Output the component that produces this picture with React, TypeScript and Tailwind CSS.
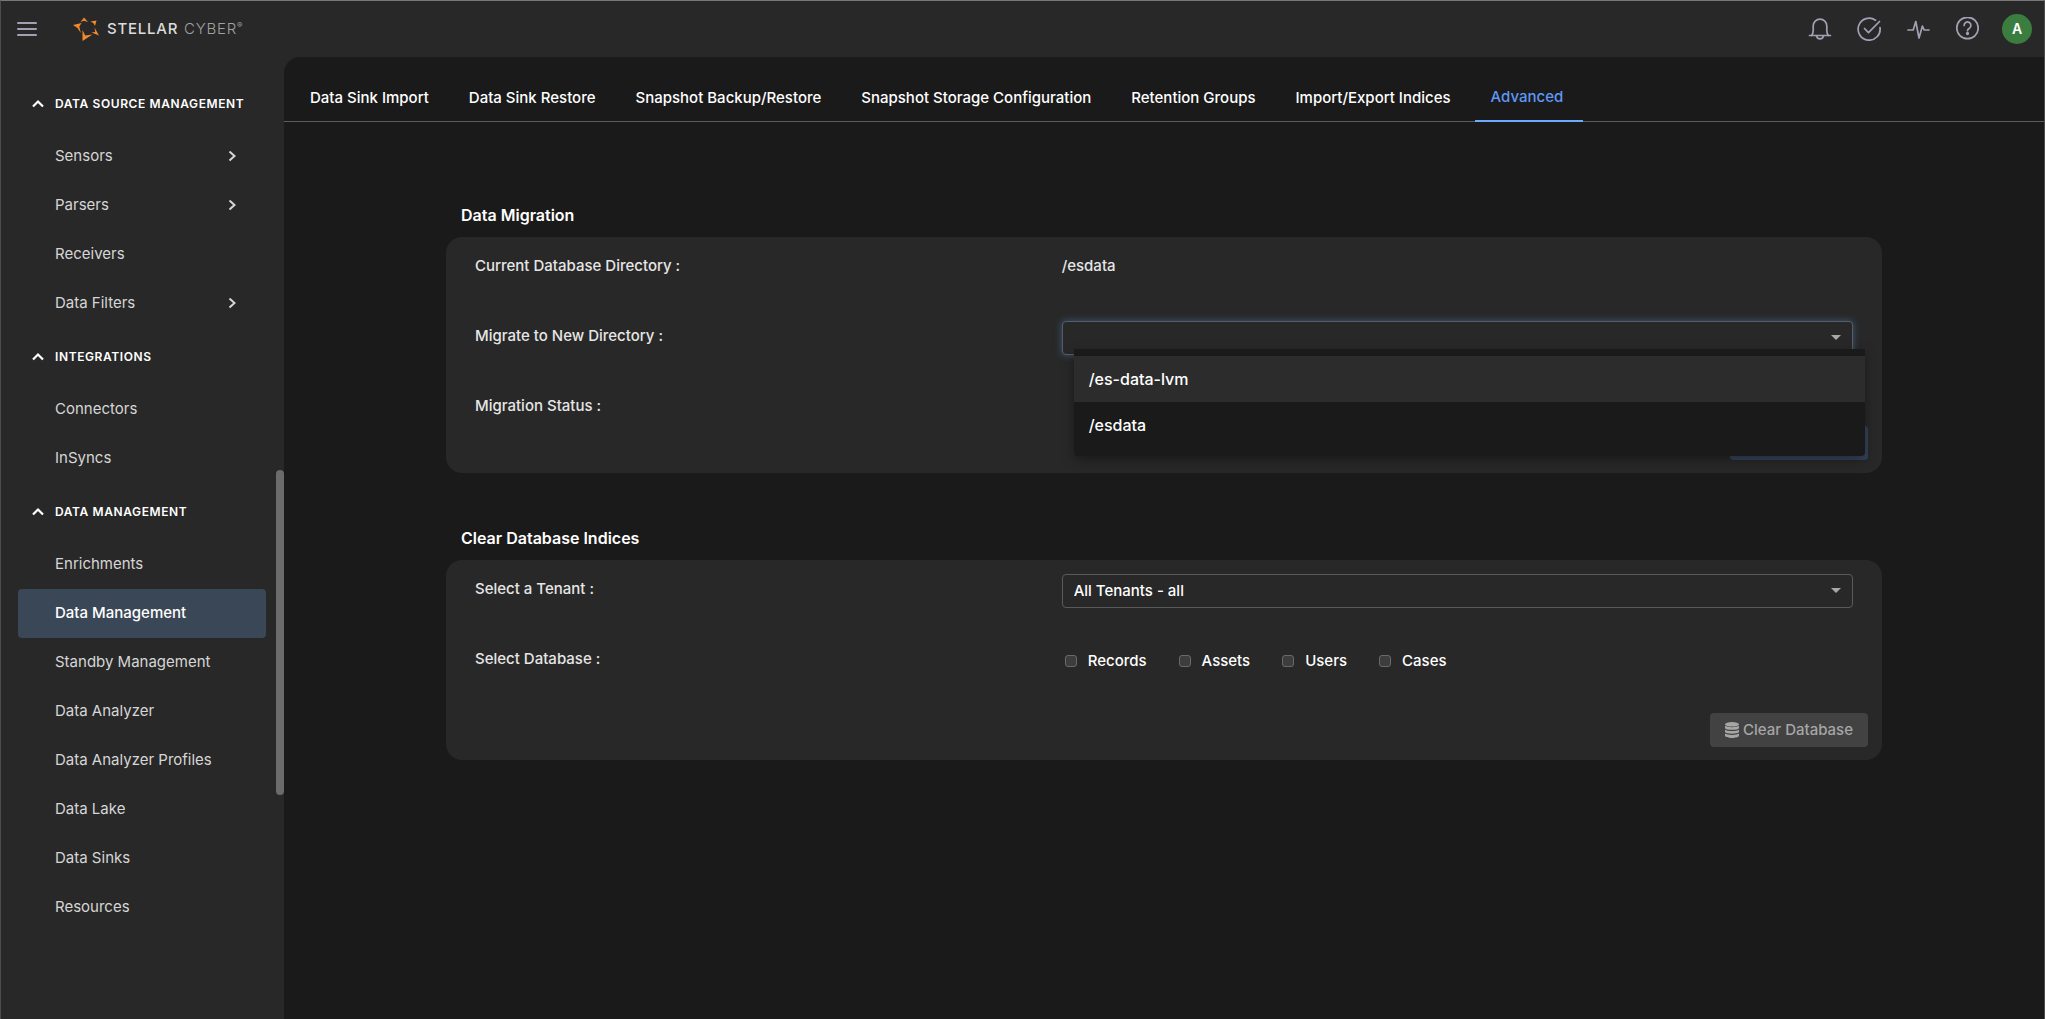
import { useState } from 'react'
import type { ReactNode } from 'react'

type NavItem = { label: string; expandable?: boolean }
type NavSection = { title: string; items: NavItem[] }

const sections: NavSection[] = [
  {
    title: 'DATA SOURCE MANAGEMENT',
    items: [
      { label: 'Sensors', expandable: true },
      { label: 'Parsers', expandable: true },
      { label: 'Receivers' },
      { label: 'Data Filters', expandable: true },
    ],
  },
  {
    title: 'INTEGRATIONS',
    items: [{ label: 'Connectors' }, { label: 'InSyncs' }],
  },
  {
    title: 'DATA MANAGEMENT',
    items: [
      { label: 'Enrichments' },
      { label: 'Data Management' },
      { label: 'Standby Management' },
      { label: 'Data Analyzer' },
      { label: 'Data Analyzer Profiles' },
      { label: 'Data Lake' },
      { label: 'Data Sinks' },
      { label: 'Resources' },
    ],
  },
]

const tabs = [
  'Data Sink Import',
  'Data Sink Restore',
  'Snapshot Backup/Restore',
  'Snapshot Storage Configuration',
  'Retention Groups',
  'Import/Export Indices',
  'Advanced',
]

const directories = ['/es-data-lvm', '/esdata']
const databases = ['Records', 'Assets', 'Users', 'Cases']

function LogoMark() {
  return (
    <svg viewBox="0 0 26 24" className="h-6 w-[26px]" fill="#f08a2c" aria-hidden="true">
      <path d="M11 0.500L15 5L11 3.800L7.500 5Z" />
      <path d="M17.500 4.500L23.500 3.500L22 9L20.500 6.300Z" />
      <path d="M0 8L8.500 6L6.300 9.500L7.800 16L4.500 11Z" />
      <path d="M21.500 10.500L26 18.500L18.500 15.500L22.200 15Z" />
      <path d="M9.500 13L12.200 18.500L19.500 17.500L9.500 24Z" />
    </svg>
  )
}

function TopIcon({ label, children }: { label: string; children: ReactNode }) {
  return (
    <button type="button" aria-label={label} className="size-6 text-[#a3a0b4]">
      <svg
        viewBox="0 0 24 24"
        className="size-6"
        fill="none"
        stroke="currentColor"
        strokeWidth="1.7"
        strokeLinecap="round"
        strokeLinejoin="round"
      >
        {children}
      </svg>
    </button>
  )
}

function Header() {
  return (
    <header className="flex h-14 items-center justify-between pl-4 pr-3">
      <div className="flex items-center gap-9">
        <button type="button" aria-label="Toggle menu" className="flex w-5 flex-col gap-1">
          <span className="h-[2px] rounded-full bg-[#a3a0b4]" />
          <span className="h-[2px] rounded-full bg-[#a3a0b4]" />
          <span className="h-[2px] rounded-full bg-[#a3a0b4]" />
        </button>
        <a href="#" className="flex items-center gap-2">
          <LogoMark />
          <span className="flex text-[15px] leading-5 tracking-wider text-[#a0a0a0]">
            <span className="mr-1.5 font-medium text-[#dcdcdc]">STELLAR</span>
            <span className="font-light">CYBER</span>
            <span className="text-[8px] leading-3">®</span>
          </span>
        </a>
      </div>
      <div className="flex items-center gap-[25px]">
        <TopIcon label="Notifications">
          <path d="M1.500 18.500h21" />
          <path d="M3.500 18.500c1.300-1.300 1.700-2.700 1.700-5V9a6.800 6.800 0 0 1 13.600 0v4.500c0 2.300.4 3.700 1.700 5" />
          <path d="M8.500 19c.6 2 1.800 2.900 3.500 2.900s2.900-.9 3.500-2.900" />
        </TopIcon>
        <TopIcon label="Tasks">
          <path d="M18.500 3.200A11 11 0 1 0 23 10.500" />
          <path d="M7.500 11.500l4 4.200L22.500 4.500" />
        </TopIcon>
        <TopIcon label="System health">
          <path d="M2 13h5.200l2.600-8.500L13 21l3.400-12 1.800 4H23" />
        </TopIcon>
        <TopIcon label="Help">
          <circle cx="12.500" cy="11" r="10.700" />
          <path d="M9.100 8.400a3.400 3.400 0 1 1 5.300 2.800c-1.300.8-1.900 1.400-1.900 2.500" />
          <circle cx="12.500" cy="16.500" r="0.800" fill="currentColor" />
        </TopIcon>
        <button
          type="button"
          className="ml-[-2px] size-[30px] rounded-full bg-[#3b7d3f] text-sm font-semibold text-white"
        >
          A
        </button>
      </div>
    </header>
  )
}

function Sidebar() {
  return (
    <aside className="relative w-[283px] shrink-0 pt-[18px]">
      <nav className="pl-[17px] pr-[18px]">
        {sections.map((section) => (
          <div key={section.title}>
            <button
              type="button"
              className="flex h-[57px] w-full items-center gap-[11px] pl-[14px] text-xs font-semibold tracking-wider text-white"
            >
              <svg viewBox="0 0 12 12" className="size-3" fill="none" stroke="currentColor" strokeWidth="2.200">
                <path d="M1 8.500L6 3.500L11 8.500" />
              </svg>
              {section.title}
            </button>
            {section.items.map((item) => (
              <a
                key={item.label}
                href="#"
                className={
                  item.label === 'Data Management'
                    ? 'flex h-[49px] items-center justify-between rounded bg-[#3a4756] pl-[37px] pr-[30px] text-[15px] font-medium text-white'
                    : 'flex h-[49px] items-center justify-between rounded pl-[37px] pr-[30px] text-[15px] text-[#d6d6d6]'
                }
              >
                {item.label}
                {item.expandable && (
                  <svg viewBox="0 0 8 12" className="h-3 w-2" fill="none" stroke="currentColor" strokeWidth="2">
                    <path d="M1.500 0.500L6.500 5L1.500 9.500" />
                  </svg>
                )}
              </a>
            ))}
          </div>
        ))}
      </nav>
      <div className="absolute right-0 top-[413px] h-[325px] w-2 rounded-full bg-[#6b6b6b]" />
    </aside>
  )
}

function Caret() {
  return (
    <svg
      viewBox="0 0 10 5"
      className="pointer-events-none absolute right-3 top-[14px] h-[5px] w-[10px]"
      fill="#a8a8a8"
      aria-hidden="true"
    >
      <path d="M0 0h10L5 5z" />
    </svg>
  )
}

function Field({ label, htmlFor, last, children }: {
  label: string
  htmlFor?: string
  last?: boolean
  children?: ReactNode
}) {
  return (
    <div className={last ? 'grid grid-cols-12 leading-[30px]' : 'grid h-[70px] grid-cols-12 items-start leading-[30px]'}>
      <label htmlFor={htmlFor} className="col-span-5 px-[15px]">
        {label} :
      </label>
      <div className="col-span-7 px-[15px]">{children}</div>
    </div>
  )
}

function DataMigration() {
  const [directory, setDirectory] = useState('')

  return (
    <section>
      <h2 className="px-[15px] text-base font-semibold leading-6 text-white">Data Migration</h2>
      <div className="mt-[10px] rounded-2xl bg-[#282828] px-[14px] pb-[13px] pt-[14px] text-[15px] font-medium text-[#e6e6e6]">
        <Field label="Current Database Directory">/esdata</Field>
        <Field label="Migrate to New Directory" htmlFor="directory">
          <div className="relative">
            <select
              id="directory"
              value={directory}
              onChange={(e) => setDirectory(e.target.value)}
              className="block h-[34px] w-full appearance-none rounded border border-[#555d66] bg-[#282828] px-[11px] shadow-[0_0_6px_1px_#3a4f66] outline-none"
            >
              <option value=""></option>
              {directories.map((d) => (
                <option key={d}>{d}</option>
              ))}
            </select>
            <Caret />
            <ul
              role="listbox"
              className="absolute left-3 top-7 z-10 w-full rounded-b bg-[#1a1a1a] pb-2 pt-[7px] text-base shadow-[0_4px_12px_rgba(0,0,0,0.35)]"
            >
              {directories.map((d, i) => (
                <li
                  key={d}
                  role="option"
                  aria-selected={i === 0}
                  onClick={() => setDirectory(d)}
                  className={
                    i === 0
                      ? 'flex h-[46px] items-center bg-[#2c2c2c] px-[15px] text-white'
                      : 'flex h-[46px] items-center px-[15px] text-white'
                  }
                >
                  {d}
                </li>
              ))}
            </ul>
          </div>
        </Field>
        <Field label="Migration Status" last />
        <div className="mt-[5px] flex justify-end">
          <button type="button" aria-label="Migrate" className="h-[34px] w-[138px] rounded bg-[#34435a]" />
        </div>
      </div>
    </section>
  )
}

function ClearIndices() {
  return (
    <section className="mt-[53px]">
      <h2 className="px-[15px] text-base font-semibold leading-6 text-white">Clear Database Indices</h2>
      <div className="mt-[10px] rounded-2xl bg-[#282828] px-[14px] pb-[13px] pt-[14px] text-[15px] font-medium text-[#e6e6e6]">
        <Field label="Select a Tenant" htmlFor="tenant">
          <div className="relative">
            <select
              id="tenant"
              className="block h-[34px] w-full appearance-none rounded border border-[#5a5a5a] bg-[#282828] px-[11px] text-white outline-none"
            >
              <option>All Tenants - all</option>
            </select>
            <Caret />
          </div>
        </Field>
        <Field label="Select Database" last>
          <div className="flex gap-8 pl-[3px] pt-0.5">
            {databases.map((name) => (
              <label key={name} className="flex items-center gap-[11px] text-white">
                <input
                  type="checkbox"
                  className="size-3 appearance-none rounded-[3px] border border-[#6a6a6a] bg-[#3d3d3d] checked:bg-[#6cabff]"
                />
                {name}
              </label>
            ))}
          </div>
        </Field>
        <div className="mt-[37px] flex justify-end">
          <button
            type="button"
            disabled
            className="flex h-[34px] items-center gap-1 rounded bg-[#424242] px-[15px] text-[#a6a6a6]"
          >
            <svg viewBox="0 0 14 16" className="h-4 w-[14px]" fill="currentColor" aria-hidden="true">
              <ellipse cx="7" cy="2.300" rx="7" ry="2.300" />
              <path d="M0 3.800c2 1.800 12 1.800 14 0v2.400c-1 2.200-13 2.200-14 0z" />
              <path d="M0 7.700c2 1.800 12 1.800 14 0v2.400c-1 2.200-13 2.200-14 0z" />
              <path d="M0 11.600c2 1.800 12 1.800 14 0v2.200c-1 2.900-13 2.900-14 0z" />
            </svg>
            Clear Database
          </button>
        </div>
      </div>
    </section>
  )
}

function Tabs() {
  return (
    <div className="flex h-[65px] items-end gap-1 border-b border-[#5c5c5c] pl-[10px]">
      {tabs.map((tab) => (
        <button
          key={tab}
          type="button"
          className={
            tab === 'Advanced'
              ? '-mb-px h-[48px] border-b-2 border-[#6cabff] pl-4 pr-5 text-[15px] font-medium text-[#5f98f5]'
              : 'h-[45px] pl-4 pr-5 text-[15px] font-medium text-white'
          }
        >
          {tab}
        </button>
      ))}
    </div>
  )
}

export default function App() {
  return (
    <div className="flex min-h-screen flex-col border-x border-t border-x-[#4c4c4c] border-t-[#777777] bg-[#282828] font-['Inter',sans-serif] antialiased">
      <Header />
      <div className="flex flex-1">
        <Sidebar />
        <main className="flex-1 rounded-tl-2xl bg-[#1a1a1a]">
          <Tabs />
          <div className="px-[162px] pt-[81px]">
            <DataMigration />
            <ClearIndices />
          </div>
        </main>
      </div>
    </div>
  )
}
